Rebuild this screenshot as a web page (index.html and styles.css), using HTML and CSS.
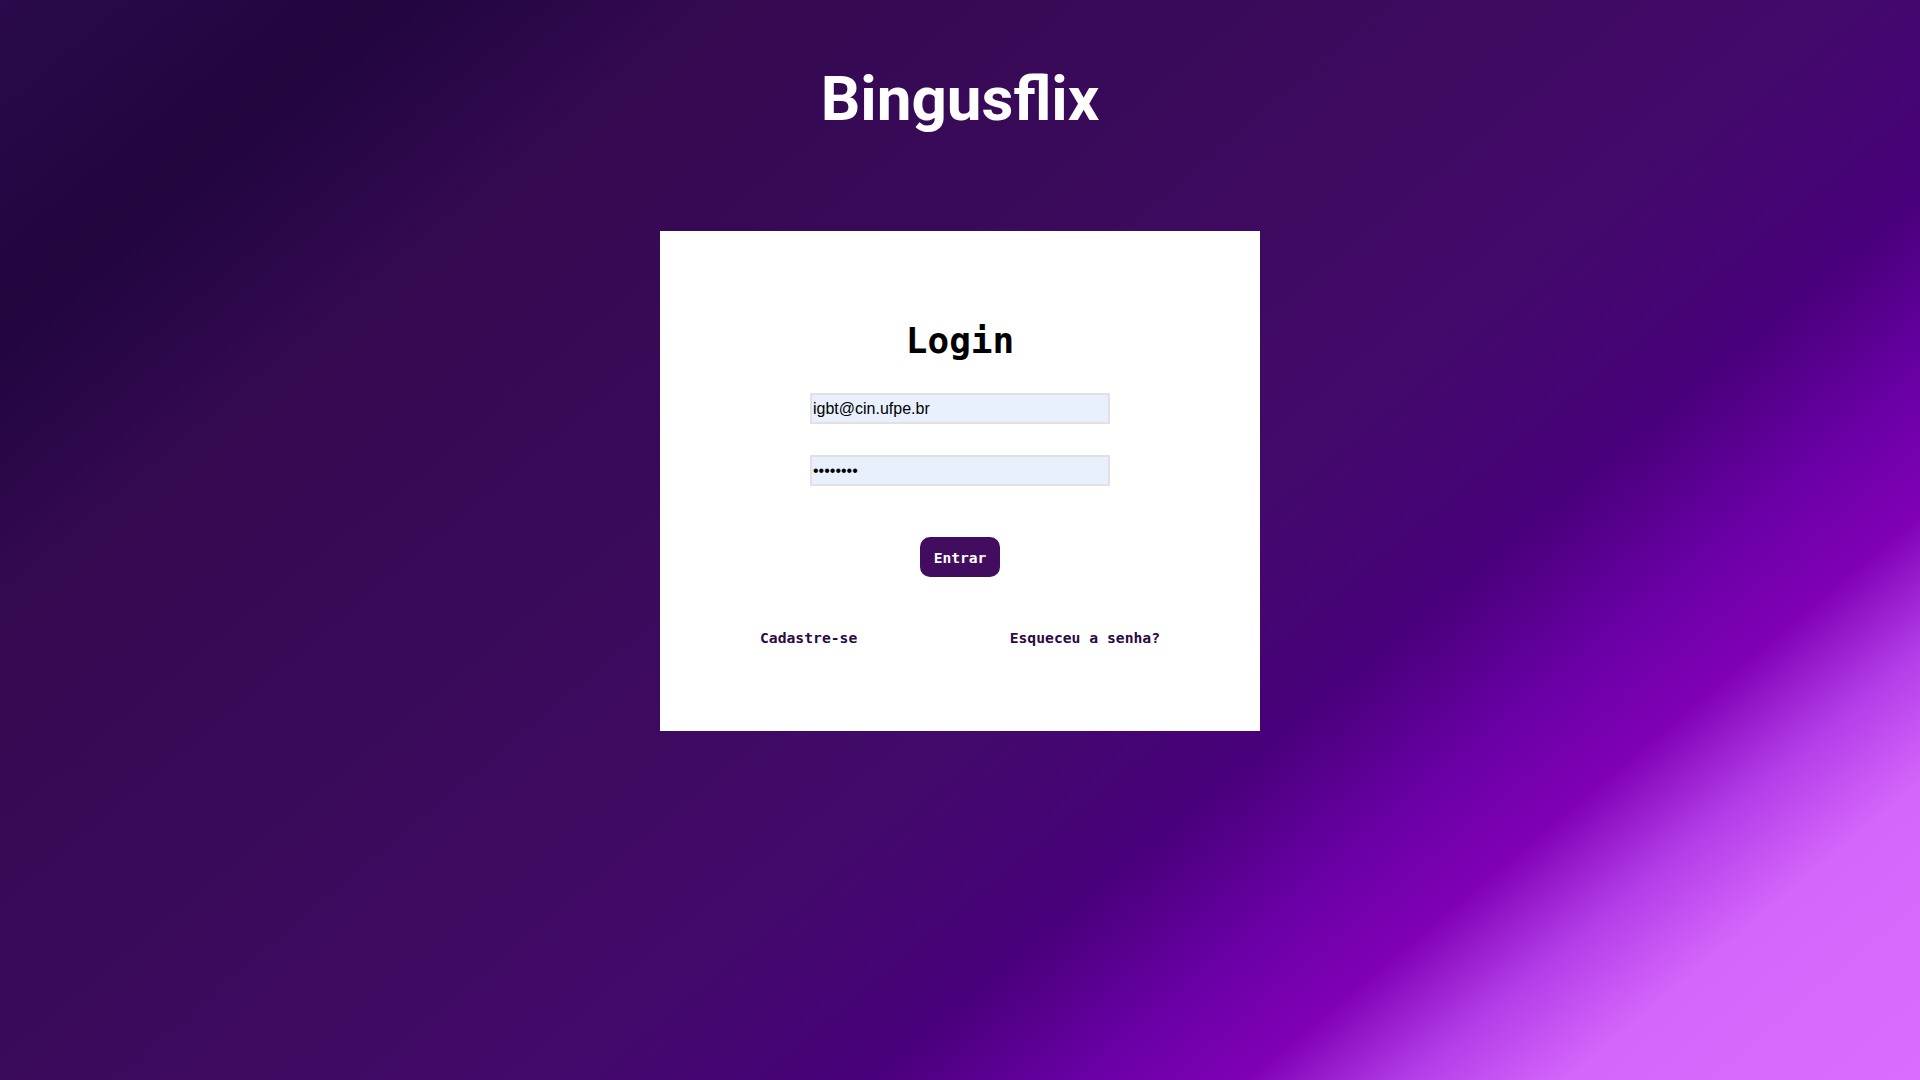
FILE: index.html
```html
<!DOCTYPE html>
<html lang="pt-BR">
<head>
<meta charset="utf-8">
<title>Bingusflix - Login</title>
<link rel="stylesheet" href="styles.css">
</head>
<body>
<div class="page">
  <header class="brand">Bingusflix</header>
  <main class="card">
    <h1 class="card-title">Login</h1>
    <form class="login-form">
      <input class="field" type="email" value="igbt@cin.ufpe.br">
      <input class="field" type="password" value="12345678">
      <button class="submit" type="button">Entrar</button>
    </form>
    <nav class="links">
      <a class="link" href="#">Cadastre-se</a>
      <a class="link" href="#">Esqueceu a senha?</a>
    </nav>
  </main>
</div>
</body>
</html>
```
FILE: styles.css
```css
html, body {
  margin: 0;
  padding: 0;
}

body {
  min-height: 100vh;
  background: linear-gradient(140deg,
    #2a0a4a 0%,
    #20053f 12%,
    #33094f 22%,
    #3b0a5c 42%,
    #420a6a 57%,
    #48007a 67%,
    #6a00a6 74%,
    #8000b6 79%,
    #b43de8 84%,
    #d466fb 89%,
    #da6cff 100%);
  font-family: "DejaVu Sans Mono", monospace;
}

.page {
  display: flex;
  flex-direction: column;
  align-items: center;
  min-height: 100vh;
}

.brand {
  padding-top: 63px;
  font-family: Roboto, "Liberation Sans", sans-serif;
  font-weight: 700;
  font-size: 62px;
  line-height: 72px;
  color: #ffffff;
}

.card {
  box-sizing: border-box;
  width: 600px;
  height: 500px;
  margin-top: 96px;
  padding-top: 89px;
  background: #ffffff;
  display: flex;
  flex-direction: column;
  align-items: center;
}

.card-title {
  margin: 0;
  font-family: "DejaVu Sans Mono", monospace;
  font-weight: 700;
  font-size: 36px;
  line-height: 42px;
  color: #000000;
}

.login-form {
  display: flex;
  flex-direction: column;
  align-items: center;
  margin-top: 31px;
}

.field {
  box-sizing: border-box;
  width: 300px;
  height: 31px;
  margin: 0 0 31px 0;
  padding: 0 1px;
  border: 2px solid #e1e1e1;
  border-radius: 0;
  background: #e8f0fe;
  font-family: "Liberation Sans", Arial, sans-serif;
  font-size: 16px;
  color: #000000;
  outline: none;
}

.field:last-of-type {
  margin-bottom: 0;
}

.submit {
  box-sizing: border-box;
  width: 80px;
  height: 40px;
  margin-top: 51px;
  padding: 0;
  border: none;
  border-radius: 10px;
  background: #420d5f;
  color: #ffffff;
  font-family: "DejaVu Sans Mono", monospace;
  font-weight: 700;
  font-size: 14.6px;
  line-height: 17px;
  cursor: pointer;
}

.links {
  box-sizing: border-box;
  width: 100%;
  padding: 0 100px;
  margin-top: 52px;
  display: flex;
  justify-content: space-between;
}

.link {
  font-family: "DejaVu Sans Mono", monospace;
  font-weight: 700;
  font-size: 14.7px;
  line-height: 17px;
  color: #2b0a45;
  text-decoration: none;
}
```
